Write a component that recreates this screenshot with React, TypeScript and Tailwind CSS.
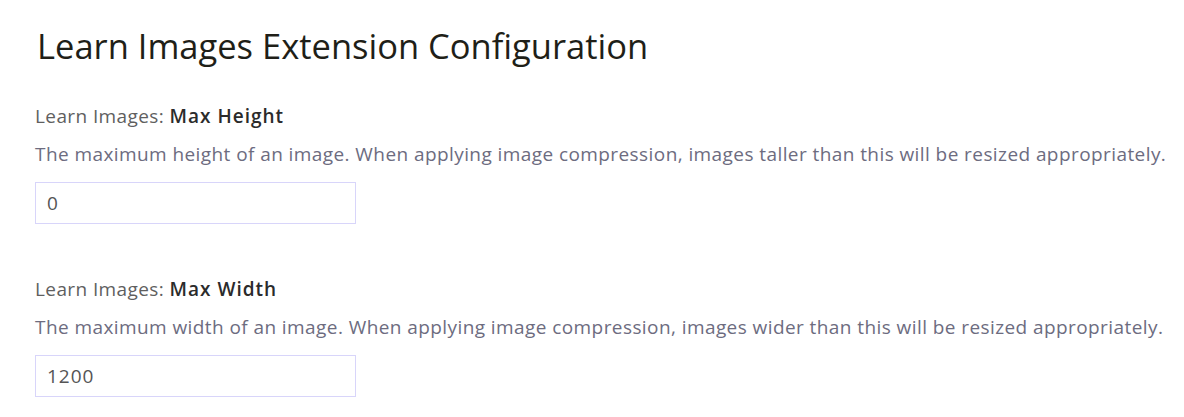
import React from "react";

function Setting({ name, desc, value }: { name: string; desc: string; value: string }) {
  return (
    <div className="flex flex-col">
      <div className="text-[19px] leading-[24px] tracking-[0.4px] text-[#5f5f5f]">
        Learn Images: <span className="font-semibold tracking-[1px] text-[#2b2b2b]">{name}</span>
      </div>
      <div className="mt-[14px] text-[19px] leading-[24px] tracking-[0.42px] text-[#6d6c7f]">{desc}</div>
      <div className="mt-[16px] w-[321px] h-[42px] border border-[#d8d5fa] bg-white flex items-center px-[11px] text-[19px] tracking-[1px] text-[#555555]">
        {value}
      </div>
    </div>
  );
}

export default function App() {
  return (
    <div
      className="w-[1184px] h-[417px] bg-white overflow-hidden pl-[35px] pt-[26px]"
      style={{ fontFamily: '"Open Sans", "Noto Sans", sans-serif' }}
    >
      <h1 className="ml-[2px] text-[34.5px] leading-[40px] text-[#1f1f18] font-medium">
        Learn Images Extension Configuration
      </h1>
      <div className="mt-[38px] flex flex-col gap-[53px]">
        <Setting
          name="Max Height"
          desc="The maximum height of an image. When applying image compression, images taller than this will be resized appropriately."
          value="0"
        />
        <Setting
          name="Max Width"
          desc="The maximum width of an image. When applying image compression, images wider than this will be resized appropriately."
          value="1200"
        />
      </div>
    </div>
  );
}
